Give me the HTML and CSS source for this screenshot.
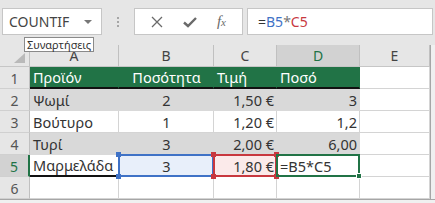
FILE: index.html
```html
<!DOCTYPE html>
<html lang="el">
<head>
    <meta charset="UTF-8">
    <meta name="viewport" content="width=device-width, initial-scale=1.0">
    <title>COUNTIF</title>
    <link rel="stylesheet" href="styles.css">
</head>
<body>
    <div class="toolbar">
        <div class="namebox"><span>COUNTIF</span><span class="caret"></span></div>
        <div class="grip"><i></i><i></i><i></i></div>
        <div class="buttons">
            <svg class="icon" width="12" height="12" viewBox="0 0 12 12"><path d="M1 1 L11 11 M11 1 L1 11" stroke="#6a6a6a" stroke-width="1.3" fill="none"/></svg>
            <svg class="icon" width="14" height="12" viewBox="0 0 14 12"><path d="M1 6.5 L5 10 L13 2" stroke="#6a6a6a" stroke-width="2.4" fill="none"/></svg>
            <span class="fx">f<small>x</small></span>
        </div>
        <div class="formula">=<span class="ref-b">B5</span><span class="op">*</span><span class="ref-c">C5</span></div>
        <div class="tooltip">Συναρτήσεις</div>
    </div>

    <div class="sheet">
        <div class="h corner"></div>
        <div class="h">A</div>
        <div class="h">B</div>
        <div class="h">C</div>
        <div class="h active">D</div>
        <div class="h">E</div>
        <div class="edge"></div>

        <div class="r">1</div>
        <div class="c th">Προϊόν</div>
        <div class="c th mid">Ποσότητα</div>
        <div class="c th">Τιμή</div>
        <div class="c th">Ποσό</div>
        <div class="c"></div>
        <div class="edge"></div>

        <div class="r">2</div>
        <div class="c band">Ψωμί</div>
        <div class="c band mid">2</div>
        <div class="c band num">1,50 €</div>
        <div class="c band num">3</div>
        <div class="c"></div>
        <div class="edge"></div>

        <div class="r">3</div>
        <div class="c">Βούτυρο</div>
        <div class="c mid">1</div>
        <div class="c num">1,20 €</div>
        <div class="c num">1,2</div>
        <div class="c"></div>
        <div class="edge"></div>

        <div class="r">4</div>
        <div class="c band">Τυρί</div>
        <div class="c band mid">3</div>
        <div class="c band num">2,00 €</div>
        <div class="c band num">6,00</div>
        <div class="c"></div>
        <div class="edge"></div>

        <div class="r active">5</div>
        <div class="c last">Μαρμελάδα</div>
        <div class="c mid sel-blue">3
            <span class="frame blue"><i class="hd tl"></i><i class="hd tr"></i><i class="hd bl"></i><i class="hd br"></i></span>
        </div>
        <div class="c num sel-red">1,80 €
            <span class="frame red"><i class="hd tl"></i><i class="hd tr"></i><i class="hd bl"></i><i class="hd br"></i></span>
        </div>
        <div class="c sel-green">=B5*C5
            <span class="frame green"><i class="hd br"></i></span>
        </div>
        <div class="c"></div>
        <div class="edge"></div>

        <div class="r">6</div>
        <div class="c"></div>
        <div class="c"></div>
        <div class="c"></div>
        <div class="c"></div>
        <div class="c"></div>
        <div class="edge"></div>

        <div class="foot"></div>
    </div>
</body>
</html>
```

FILE: styles.css
```css
* {
    box-sizing: border-box;
}
body {
    margin: 0;
    width: 435px;
    height: 203px;
    overflow: hidden;
    font-family: 'Noto Sans', 'Open Sans', sans-serif;
    background: #e6e6e6;
    color: #262626;
}

/* formula bar */
.toolbar {
    position: relative;
    height: 45px;
    display: flex;
    align-items: flex-start;
    padding-top: 8px;
}
.namebox {
    margin-left: 2px;
    width: 100px;
    height: 27px;
    background: #fff;
    border: 1px solid #c6c6c6;
    display: flex;
    align-items: center;
    justify-content: space-between;
    padding: 0 9px 0 6px;
    font-size: 14px;
    color: #444;
}
.caret {
    border-left: 4px solid transparent;
    border-right: 4px solid transparent;
    border-top: 4px solid #777;
}
.grip {
    width: 32px;
    height: 27px;
    display: flex;
    flex-direction: column;
    align-items: center;
    justify-content: center;
    gap: 2px;
}
.grip i {
    width: 2px;
    height: 2px;
    background: #a6a6a6;
}
.buttons {
    width: 109px;
    height: 27px;
    background: #fff;
    border: 1px solid #c6c6c6;
    display: flex;
    align-items: center;
    justify-content: space-around;
    padding: 0 6px;
}
.fx {
    font-family: 'Liberation Serif', serif;
    font-style: italic;
    font-size: 15px;
    color: #6a6a6a;
}
.fx small {
    font-size: 11px;
}
.formula {
    margin-left: 4px;
    width: 186px;
    height: 27px;
    background: #fff;
    border: 1px solid #c6c6c6;
    padding-left: 10px;
    font-size: 14px;
    line-height: 25px;
    color: #333;
}
.ref-b { color: #3f72c6; }
.ref-c { color: #c8383f; }
.op { color: #777; }
.tooltip {
    position: absolute;
    left: 24px;
    top: 37px;
    width: 70px;
    height: 15px;
    background: #fff;
    border: 1px solid #8a8a8a;
    font-size: 11px;
    line-height: 13px;
    padding-left: 2px;
    color: #333;
    white-space: nowrap;
    z-index: 5;
}

/* grid */
.sheet {
    display: grid;
    grid-template-columns: 30px 89px 95px 63px 83px 70px 5px;
    grid-template-rows: repeat(7, 22px) 4px;
}
.h {
    background: #e6e6e6;
    border-right: 1px solid #c0c0c0;
    border-bottom: 1px solid #c6c6c6;
    display: flex;
    align-items: flex-end;
    justify-content: center;
    font-size: 14px;
    line-height: 14px;
    color: #444;
    padding-bottom: 3px;
}
.h.active {
    background: #d2d2d2;
    color: #217346;
}
.corner {
    position: relative;
}
.corner::after {
    content: '';
    position: absolute;
    right: 4px;
    bottom: 3px;
    border-left: 11px solid transparent;
    border-bottom: 10px solid #b9b9b9;
}
.r {
    background: #e6e6e6;
    border-right: 1px solid #c0c0c0;
    border-bottom: 1px solid #d0d0d0;
    display: flex;
    align-items: center;
    justify-content: center;
    font-size: 14px;
    color: #555;
    padding-top: 1px;
}
.r.active {
    background: #d2d2d2;
    color: #217346;
    border-right: 2px solid #217346;
}
.c {
    position: relative;
    background: #fff;
    border-right: 1px solid #d4d4d4;
    border-bottom: 1px solid #d4d4d4;
    display: flex;
    align-items: flex-end;
    padding: 0 2px 0 3px;
    font-size: 14.5px;
    line-height: 20px;
    color: #333;
    white-space: nowrap;
}
.c.mid { justify-content: center; }
.c.num { justify-content: flex-end; }
.c.th {
    background: #217346;
    border-right-color: #217346;
    border-bottom: 2px solid #111;
    color: #fff;
}
.c.band {
    background: #d9d9d9;
    border-right-color: #d9d9d9;
    border-bottom-color: #d9d9d9;
}
.c.last {
    border-bottom: 2px solid #111;
}
.sel-blue { background: #e8effa; }
.sel-red { background: #fbeaea; }
.frame {
    position: absolute;
    top: -1px;
    left: -1px;
    right: -1px;
    bottom: -1px;
    border: 2px solid;
    z-index: 2;
}
.frame.blue { border-color: #3f72c6; }
.frame.red { border-color: #c8383f; }
.frame.green { border-color: #217346; z-index: 3; }
.hd {
    position: absolute;
    width: 5px;
    height: 5px;
    z-index: 4;
}
.blue .hd { background: #3f72c6; }
.red .hd { background: #c8383f; }
.green .hd { background: #217346; border: 1px solid #fff; width: 6px; height: 6px; }
.hd.tl { left: -4px; top: -4px; }
.hd.tr { right: -4px; top: -4px; }
.hd.bl { left: -4px; bottom: -4px; }
.hd.br { right: -4px; bottom: -4px; }
.edge {
    background: #f0f0f0;
    border-left: 1px solid #a6a6a6;
}
.foot {
    grid-column: 1 / -1;
    background: #f0f0f0;
    border-top: 1px solid #a6a6a6;
}
```
